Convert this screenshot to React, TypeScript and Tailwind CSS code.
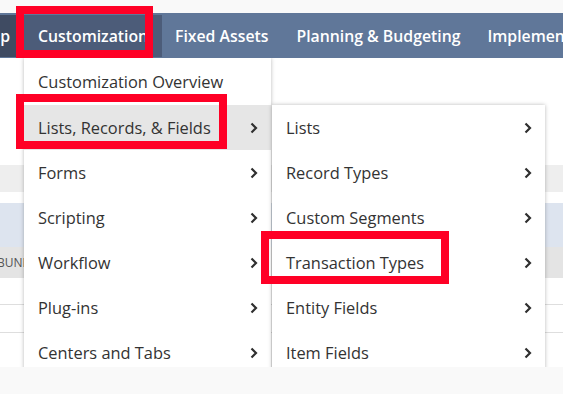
import React from 'react'

const mainItems = [
  'Lists, Records, & Fields',
  'Forms',
  'Scripting',
  'Workflow',
  'Plug-ins',
  'Centers and Tabs',
]

const subItems = [
  'Lists',
  'Record Types',
  'Custom Segments',
  'Transaction Types',
  'Entity Fields',
  'Item Fields',
]

const Chevron = () => (
  <svg width="8" height="12" viewBox="0 0 8 12" className="shrink-0">
    <path d="M1.5 1.5 L6 6 L1.5 10.5" fill="none" stroke="#2f2f2f" strokeWidth="2.2" />
  </svg>
)

const MenuRow: React.FC<{ label: string; active?: boolean }> = ({ label, active }) => (
  <div className={`h-[45px] flex items-center justify-between pl-[14px] pr-[13px] ${active ? 'bg-[#e6e6e6]' : ''}`}>
    <span className="text-[16.4px] text-[#333] pt-[1px]">{label}</span>
    <Chevron />
  </div>
)

export default function App() {
  return (
    <div className="w-[563px] h-[394px] bg-[#f9f9f9] relative overflow-hidden font-['Open_Sans',sans-serif]">
      <div className="h-[13px]" />
      <nav className="h-[45px] flex items-center bg-[#607799] text-white text-[15.8px] font-semibold whitespace-nowrap overflow-hidden pt-[3px]">
        <div className="w-[24px] h-full shrink-0 bg-[#3f4b62] flex items-center justify-end overflow-hidden pr-[14px] -mt-[3px] pt-[3px]">
          <span>Setup</span>
        </div>
        <div className="w-[138px] h-full shrink-0 bg-[#4c5c79] flex items-center pl-[14px] overflow-hidden -mt-[3px] pt-[3px]">
          Customization
        </div>
        <div className="pl-[13px] shrink-0">Fixed Assets</div>
        <div className="pl-[28px] shrink-0">Planning &amp; Budgeting</div>
        <div className="pl-[27px] shrink-0">Implementation</div>
      </nav>

      <div className="relative h-[309px] bg-white overflow-hidden">
        <div className="h-[107px]" />
        <div className="h-[27px] bg-[#eeeeee]" />
        <div className="h-[11px]" />
        <div className="h-[44px] bg-[#dde4ef]" />
        <div className="h-[31px] bg-[#e4e4e4] flex items-center">
          <div className="w-[24px] overflow-hidden whitespace-nowrap text-[12px] text-[#555]">
            <span className="-ml-[3px]">BUNDLE</span>
          </div>
        </div>
        <div className="h-[27px] border-b border-[#dedede]" />
        <div className="h-[28px] border-b border-[#dedede]" />
        <div className="h-[34px]" />

        <div className="absolute left-[24px] top-0 w-[247px] bg-white shadow-[0_0_4px_rgba(0,0,0,0.28)]">
          <div className="h-[47px] flex items-center pl-[14px]">
            <span className="text-[16.4px] text-[#333] pt-[1px]">Customization Overview</span>
          </div>
          {mainItems.map((m, i) => (
            <MenuRow key={m} label={m} active={i === 0} />
          ))}
        </div>

        <div className="absolute left-[272px] top-[47px] w-[273px] bg-white shadow-[0_0_4px_rgba(0,0,0,0.28)]">
          {subItems.map((s) => (
            <MenuRow key={s} label={s} />
          ))}
        </div>
      </div>

      <div className="absolute left-[16px] top-[6px] w-[137px] h-[52px] border-[8px] border-[#ff0026]" />
      <div className="absolute left-[16px] top-[94px] w-[211px] h-[55px] border-[8px] border-[#ff0026]" />
      <div className="absolute left-[261px] top-[231px] w-[188px] h-[53px] border-[8px] border-[#ff0026]" />
    </div>
  )
}
